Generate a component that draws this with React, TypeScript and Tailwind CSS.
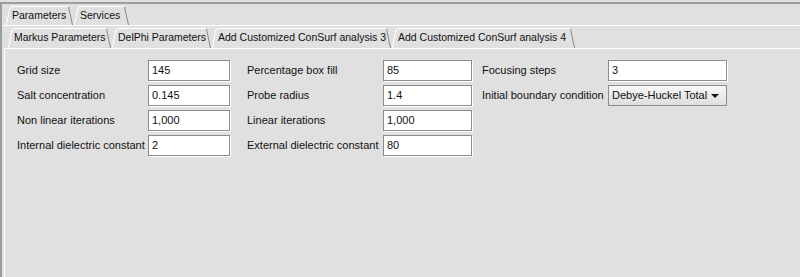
import React from "react";

type TabProps = { label: string; width: number; height: number; selected?: boolean };

function Tab({ label, width, height, selected }: TabProps) {
  return (
    <div
      className={`relative shrink-0 flex items-center pl-[6px] whitespace-nowrap text-[10.5px] text-[#111] ${selected ? "z-10" : ""}`}
      style={{ width, height }}
    >
      <svg
        className="absolute left-0 top-0 pointer-events-none"
        width={width}
        height={height}
        shapeRendering="crispEdges"
      >
        <path d={`M0.5 ${height} L3.5 3 L5.5 0.5 L${width - 6} 0.5`} stroke="#ffffff" fill="none" />
        <path d={`M${width - 5.5} 1 L${width - 1.5} ${height}`} stroke="#8a8a8a" fill="none" shapeRendering="auto" />
      </svg>
      <span className="relative">{label}</span>
    </div>
  );
}

function Field({ value, width }: { value: string; width: number }) {
  return (
    <div
      className="h-[21px] bg-white border border-[#8c8c8c] shadow-[1px_1px_0_#ffffff] flex items-center pl-[3px] text-[11px] text-[#111]"
      style={{ width }}
    >
      {value}
    </div>
  );
}

function Combo({ value }: { value: string }) {
  return (
    <div className="w-[119px] h-[21px] border border-[#8c8c8c] bg-gradient-to-b from-[#f8f8f8] to-[#dedede] flex items-center justify-between pl-[3px] pr-[7px] text-[11px] text-[#111]">
      <span>{value}</span>
      <svg width="8" height="4" viewBox="0 0 8 4">
        <path d="M0 0 L8 0 L4 4 Z" fill="#111" />
      </svg>
    </div>
  );
}

const rows = [
  ["Grid size", "145", "Percentage box fill", "85", "Focusing steps", "3"],
  ["Salt concentration", "0.145", "Probe radius", "1.4", "Initial boundary condition", "combo"],
  ["Non linear iterations", "1,000", "Linear iterations", "1,000", "", ""],
  ["Internal dielectric constant", "2", "External dielectric constant", "80", "", ""],
];

export default function App() {
  return (
    <div
      className="w-[800px] h-[277px] bg-[#e0e0e0] overflow-hidden"
      style={{ fontFamily: "Tahoma, 'Liberation Sans', Arial, sans-serif" }}
    >
      <div className="h-full pt-[2px]">
        <div className="h-full flex flex-col border-t-2 border-l-2 border-[#9c9c9c]">
          {/* outer tabs */}
          <div className="h-[21px] flex items-end pl-[4px]">
            <Tab label="Parameters" width={68} height={19} selected />
            <Tab label="Services" width={56} height={19} />
          </div>
          <div className="flex-1 flex flex-col border-t border-white pl-[2px]">
            {/* inner tabs */}
            <div className="h-[22px] flex items-end pl-[4px]">
              <Tab label="Markus Parameters" width={104} height={20} />
              <Tab label="DelPhi Parameters" width={100} height={20} selected />
              <Tab label="Add Customized ConSurf analysis 3" width={180} height={20} />
              <Tab label="Add Customized ConSurf analysis 4" width={184} height={20} />
            </div>
            <div className="flex-1 border-t border-l border-white pl-[12px] pt-[11px]">
              <div className="grid grid-cols-[131px_99px_136px_99px_126px_119px] gap-y-[4px] text-[11px] text-[#111]">
                {rows.map((r, i) => (
                  <React.Fragment key={i}>
                    <div className="h-[21px] flex items-center whitespace-nowrap">{r[0]}</div>
                    <div><Field value={r[1]} width={82} /></div>
                    <div className="h-[21px] flex items-center whitespace-nowrap">{r[2]}</div>
                    <div><Field value={r[3]} width={89} /></div>
                    <div className="h-[21px] flex items-center whitespace-nowrap">{r[4]}</div>
                    <div>
                      {r[5] === "combo" ? (
                        <Combo value="Debye-Huckel Total" />
                      ) : r[5] ? (
                        <Field value={r[5]} width={119} />
                      ) : null}
                    </div>
                  </React.Fragment>
                ))}
              </div>
            </div>
          </div>
        </div>
      </div>
    </div>
  );
}
